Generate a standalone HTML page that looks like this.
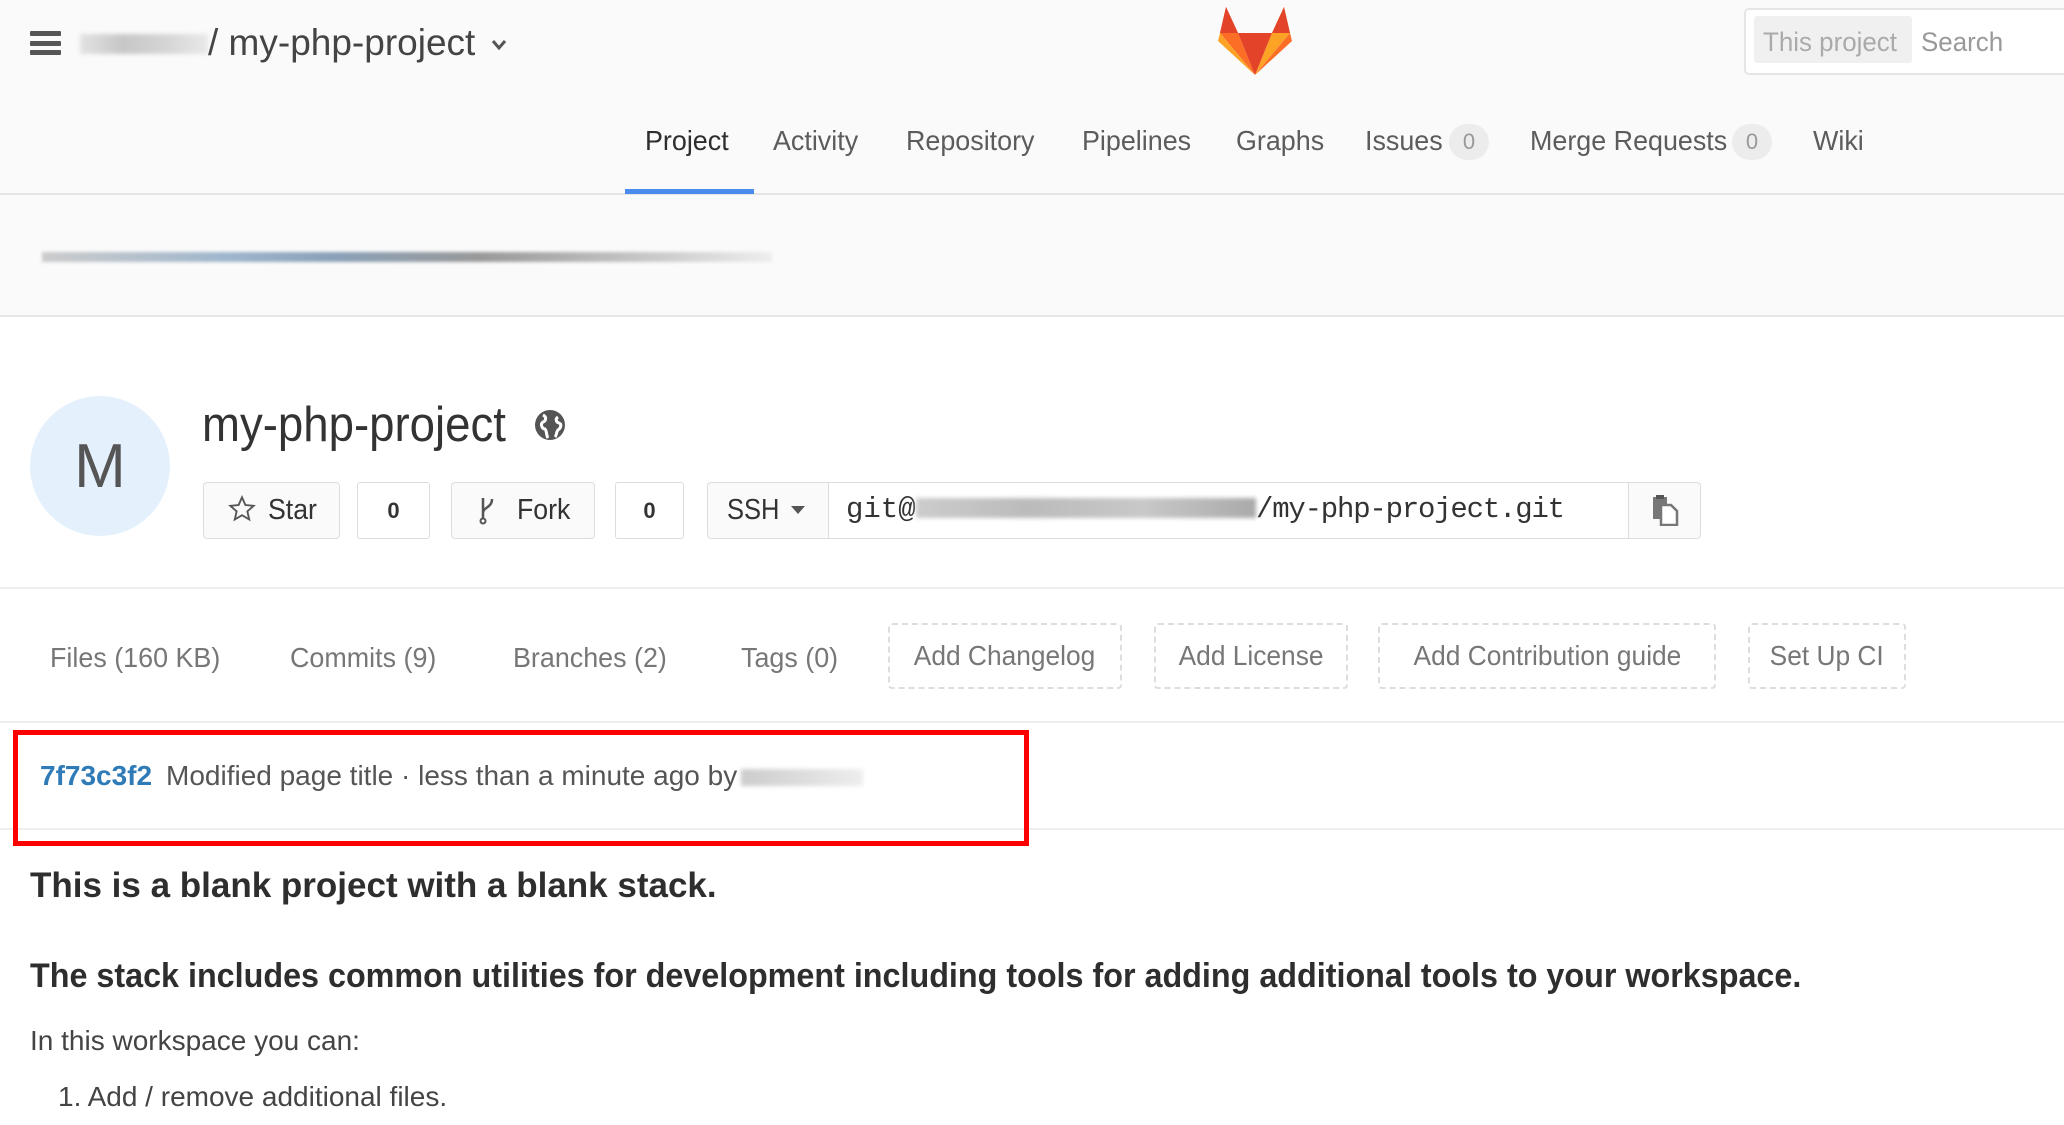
<!DOCTYPE html>
<html><head><meta charset="utf-8"><style>
*{margin:0;padding:0;box-sizing:border-box}
body{width:2064px;height:1125px;overflow:hidden;background:#fff;font-family:"Liberation Sans",sans-serif;position:relative}
.a{position:absolute;white-space:nowrap}
.t{transform-origin:left center;transform:scaleX(.96)}
.nav{font-size:28px;line-height:40px;top:121px;color:#5c5c5c}
.badge{position:absolute;top:124px;height:36px;width:40px;border-radius:18px;background:#ececec;color:#999;font-size:22px;line-height:36px;text-align:center}
.btn{position:absolute;top:482px;height:57px;border:1px solid #ddd;border-radius:4px;background:#fafafa}
.cnt{position:absolute;top:482px;height:57px;border:1px solid #ddd;border-radius:3px;background:#fff;font-size:22px;font-weight:bold;line-height:55px;text-align:center;color:#333}
.tab{font-size:28px;line-height:40px;top:638px;color:#777}
.dash{position:absolute;top:623px;height:66px;border:2px dashed #ddd;border-radius:4px;font-size:28px;line-height:62px;color:#777;text-align:center}
.dash span{display:inline-block;transform:scaleX(.94)}
.blur{position:absolute;background:linear-gradient(90deg,#ddd,#bbb,#ccc,#e5e5e5);filter:blur(2px)}
</style></head><body>
<div class="a" style="left:0;top:0;width:2064px;height:195px;background:#fafafa;border-bottom:2px solid #e5e5e5"></div>
<div class="a" style="left:0;top:195px;width:2064px;height:122px;background:#fafafa;border-bottom:2px solid #e8e8e8"></div>
<div class="a" style="left:30px;top:31px;width:31px;height:5px;background:#555;border-radius:1px"></div>
<div class="a" style="left:30px;top:41px;width:31px;height:5px;background:#555;border-radius:1px"></div>
<div class="a" style="left:30px;top:50px;width:31px;height:5px;background:#555;border-radius:1px"></div>
<div class="blur" style="left:80px;top:34px;width:128px;height:20px;opacity:.8"></div>
<div class="a" style="left:208px;top:21px;font-size:37px;line-height:44px;color:#444">/ my-php-project</div>
<svg class="a" style="left:490px;top:38px" width="18" height="14" viewBox="0 0 18 14"><path d="M3 3 L9 10 L15 3" stroke="#555" stroke-width="3" fill="none"/></svg>
<svg class="a" style="left:1218px;top:7px" width="74" height="68" viewBox="0 0 74 68">
<polygon points="37,68 2,26 8,0 20,26" fill="#fc6d26"/>
<polygon points="37,68 72,26 66,0 54,26" fill="#fca326"/>
<polygon points="37,68 20,26 54,26" fill="#e24329"/>
<polygon points="8,0 20,26 2,26" fill="#e24329"/>
<polygon points="66,0 54,26 72,26" fill="#e24329"/>
<polygon points="37,68 2,26 0,34" fill="#fca326"/>
<polygon points="37,68 72,26 74,34" fill="#fc6d26"/>
</svg>
<div class="a" style="left:1744px;top:8px;width:340px;height:67px;border:2px solid #e5e5e5;border-radius:5px;background:#fff"></div>
<div class="a" style="left:1754px;top:16px;width:158px;height:47px;background:#f0f0f0;border-radius:3px"></div>
<div class="a t" style="left:1763px;top:24px;font-size:27px;line-height:36px;color:#aaa">This project</div>
<div class="a t" style="left:1921px;top:24px;font-size:27px;line-height:36px;color:#999">Search</div>
<div class="a t nav" style="left:645px;color:#2e2e2e">Project</div>
<div class="a" style="left:625px;top:189px;width:129px;height:5px;background:#4a8bee"></div>
<div class="a t nav" style="left:773px">Activity</div>
<div class="a t nav" style="left:906px">Repository</div>
<div class="a t nav" style="left:1082px">Pipelines</div>
<div class="a t nav" style="left:1236px">Graphs</div>
<div class="a t nav" style="left:1365px">Issues</div>
<div class="badge" style="left:1449px">0</div>
<div class="a t nav" style="left:1530px">Merge Requests</div>
<div class="badge" style="left:1732px">0</div>
<div class="a t nav" style="left:1813px">Wiki</div>
<div class="a" style="left:42px;top:252px;width:730px;height:10px;background:linear-gradient(90deg,#ccc,#9fb6cc 25%,#8aa1b8 40%,#999 60%,#ccc 85%,#eee);filter:blur(1.5px)"></div>
<div class="a" style="left:30px;top:396px;width:140px;height:140px;border-radius:50%;background:#e4f1fd"></div>
<div class="a" style="left:30px;top:436px;width:140px;text-align:center;font-size:62px;line-height:62px;color:#555">M</div>
<div class="a t" style="left:202px;top:397px;font-size:49px;line-height:56px;color:#333;transform:scaleX(.93)">my-php-project</div>
<svg class="a" style="left:534px;top:409px" width="32" height="32" viewBox="0 0 32 32"><circle cx="16" cy="16" r="15" fill="#555"/><path d="M9 6 C13 8 12 12 9 13 C6 15 8 20 11 20 C13 22 12 26 14 29 M24 8 C21 10 22 13 25 14 C28 15 27 19 24 21 C22 23 23 26 21 28" stroke="#fff" stroke-width="3" fill="none"/></svg>
<div class="btn" style="left:203px;width:137px"></div>
<svg class="a" style="left:228px;top:495px" width="28" height="28" viewBox="0 0 24 24"><path d="M12 2 L14.9 8.6 L22 9.3 L16.6 14 L18.2 21 L12 17.3 L5.8 21 L7.4 14 L2 9.3 L9.1 8.6 Z" fill="none" stroke="#555" stroke-width="1.6"/></svg>
<div class="a t" style="left:268px;top:490px;font-size:29px;line-height:40px;color:#333;transform:scaleX(.92)">Star</div>
<div class="cnt" style="left:357px;width:73px">0</div>
<div class="btn" style="left:451px;width:144px"></div>
<svg class="a" style="left:478px;top:495px" width="20" height="30" viewBox="0 0 20 30"><path d="M5 3 V27 M5 18 C5 12 14 13 14 4" stroke="#555" stroke-width="2.5" fill="none"/><circle cx="5" cy="26" r="2.5" fill="#fff" stroke="#555" stroke-width="2"/></svg>
<div class="a t" style="left:517px;top:490px;font-size:29px;line-height:40px;color:#333;transform:scaleX(.92)">Fork</div>
<div class="cnt" style="left:615px;width:69px">0</div>
<div class="btn" style="left:707px;width:122px;border-radius:4px 0 0 4px"></div>
<div class="a t" style="left:727px;top:490px;font-size:29px;line-height:40px;color:#333;transform:scaleX(.88)">SSH</div>
<svg class="a" style="left:790px;top:504px" width="16" height="12" viewBox="0 0 16 12"><path d="M1 2 H15 L8 10 Z" fill="#555"/></svg>
<div class="a" style="left:828px;top:482px;width:801px;height:57px;border:1px solid #ddd;background:#fff"></div>
<div class="a" style="left:846px;top:490px;font-family:'Liberation Mono',monospace;font-size:29px;line-height:40px;color:#333">git@</div>
<div class="blur" style="left:916px;top:498px;width:340px;height:20px;background:linear-gradient(90deg,#ccc,#bbb,#c8c8c8,#aaa)"></div>
<div class="a" style="left:1256px;top:490px;font-family:'Liberation Mono',monospace;font-size:29px;line-height:40px;color:#333;letter-spacing:-1.2px">/my-php-project.git</div>
<div class="btn" style="left:1628px;width:73px;border-radius:0 4px 4px 0"></div>
<svg class="a" style="left:1651px;top:494px" width="28" height="32" viewBox="0 0 28 32"><rect x="2" y="3" width="14" height="22" fill="#777"/><rect x="5" y="1" width="8" height="4" fill="#555"/><path d="M10 11 H20 L26 17 V31 H10 Z" fill="#fff" stroke="#777" stroke-width="2.5"/></svg>
<div class="a" style="left:0;top:587px;width:2064px;height:2px;background:#eee"></div>
<div class="a t tab" style="left:50px">Files (160 KB)</div>
<div class="a t tab" style="left:290px">Commits (9)</div>
<div class="a t tab" style="left:513px">Branches (2)</div>
<div class="a t tab" style="left:741px">Tags (0)</div>
<div class="dash" style="left:888px;width:234px"><span>Add Changelog</span></div>
<div class="dash" style="left:1154px;width:194px"><span>Add License</span></div>
<div class="dash" style="left:1378px;width:338px"><span>Add Contribution guide</span></div>
<div class="dash" style="left:1748px;width:158px"><span>Set Up CI</span></div>
<div class="a" style="left:0;top:721px;width:2064px;height:2px;background:#eee"></div>
<div class="a" style="left:0;top:828px;width:2064px;height:2px;background:#eee"></div>
<div class="a" style="left:13px;top:730px;width:1016px;height:116px;border:5px solid #f00"></div>
<div class="a" style="left:40px;top:757px;font-size:28px;line-height:38px;color:#2e7bb7;font-weight:bold">7f73c3f2</div>
<div class="a" style="left:166px;top:757px;font-size:28px;line-height:38px;color:#555">Modified page title · less than a minute ago by</div>
<div class="blur" style="left:741px;top:769px;width:122px;height:17px;background:linear-gradient(90deg,#ccc,#ddd,#eee)"></div>
<div class="a" style="left:30px;top:864px;font-size:35px;line-height:44px;color:#2e2e2e;font-weight:bold">This is a blank project with a blank stack.</div>
<div class="a t" style="left:30px;top:954px;font-size:34px;line-height:44px;color:#2e2e2e;font-weight:bold;transform:scaleX(.95)">The stack includes common utilities for development including tools for adding additional tools to your workspace.</div>
<div class="a" style="left:30px;top:1022px;font-size:28px;line-height:38px;color:#444">In this workspace you can:</div>
<div class="a" style="left:58px;top:1078px;font-size:28px;line-height:38px;color:#444">1. Add / remove additional files.</div>
</body></html>
